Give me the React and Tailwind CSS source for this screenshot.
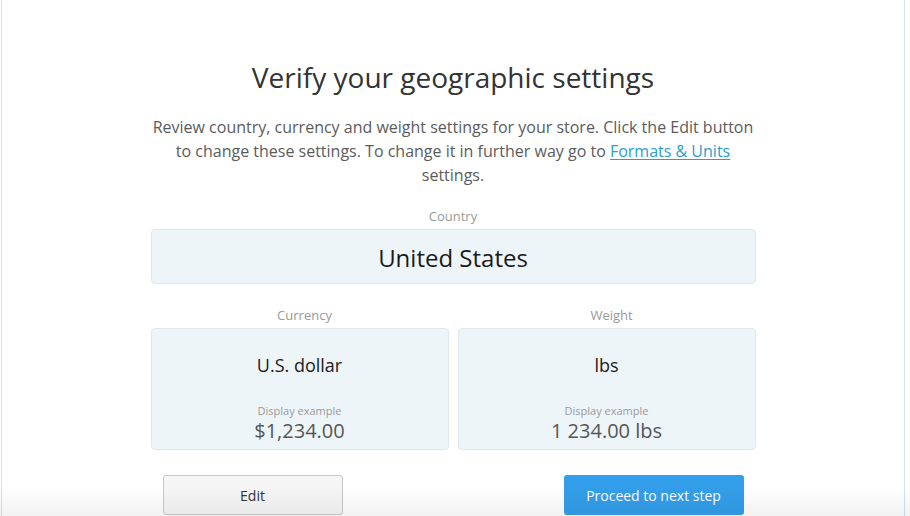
export default function App() {
  return (
    <div
      className="relative h-[516px] w-[910px] overflow-hidden bg-white"
      style={{ fontFamily: '"Open Sans", "Liberation Sans", sans-serif' }}
    >
      <div className="ml-[1px] h-full w-[904px] border-x border-[#d3e2e8]">
        <div className="mx-auto flex w-[605px] flex-col items-center pt-[57px]">
          {/* TITLE */}
          <h1 className="text-[28px] leading-[40px] text-[#333]">
            Verify your geographic settings
          </h1>

          {/* DESCRIPTION */}
          <p className="mt-[18px] w-[620px] text-center text-[16px] leading-[24px] text-[#5b5b5b]">
            Review country, currency and weight settings for your store. Click the Edit button
            to change these settings. To change it in further way go to{" "}
            <a href="#" className="text-[#2a9fc9] underline underline-offset-2">
              Formats &amp; Units
            </a>{" "}
            settings.
          </p>

          {/* COUNTRY */}
          <div className="mt-[20px] text-[13px] leading-[18px] text-[#999]">Country</div>
          <div className="mt-[4px] flex h-[55px] w-full items-center justify-center rounded-[4px] border border-[#dfe8ee] bg-[#eef5f9] text-[24px] text-[#1a1a1a]">
            <span className="mt-[2px]">United States</span>
          </div>

          {/* CURRENCY + WEIGHT */}
          <div className="mt-[22px] grid w-full grid-cols-2 gap-[9px]">
            <Field label="Currency" value="U.S. dollar" example="$1,234.00" />
            <Field label="Weight" value="lbs" example="1 234.00 lbs" />
          </div>

          {/* BUTTONS */}
          <div className="mt-[25px] flex w-full justify-between px-[12px]">
            <button className="h-[40px] w-[180px] rounded-[3px] border border-[#c8c8c8] bg-[#f5f5f5] text-[14px] text-[#333]">
              Edit
            </button>
            <button className="h-[40px] w-[180px] rounded-[3px] bg-[#339ee9] text-[14px] text-white">
              Proceed to next step
            </button>
          </div>
        </div>
      </div>

      {/* BOTTOM FADE */}
      <div className="pointer-events-none absolute bottom-0 left-0 h-[30px] w-full bg-gradient-to-b from-white/0 to-black/[0.05]" />
    </div>
  );
}

function Field({ label, value, example }) {
  return (
    <div className="flex flex-col items-center">
      <div className="pl-[10px] text-[13px] leading-[18px] text-[#999]">{label}</div>
      <div className="mt-[4px] flex h-[122px] w-full flex-col items-center rounded-[4px] border border-[#dfe8ee] bg-[#eef5f9]">
        <div className="mt-[22px] text-[18px] leading-[28px] text-[#1a1a1a]">{value}</div>
        <div className="mt-[24px] text-[11px] leading-[16px] text-[#999]">Display example</div>
        <div className="text-[20px] leading-[24px] text-[#555]">{example}</div>
      </div>
    </div>
  );
}
